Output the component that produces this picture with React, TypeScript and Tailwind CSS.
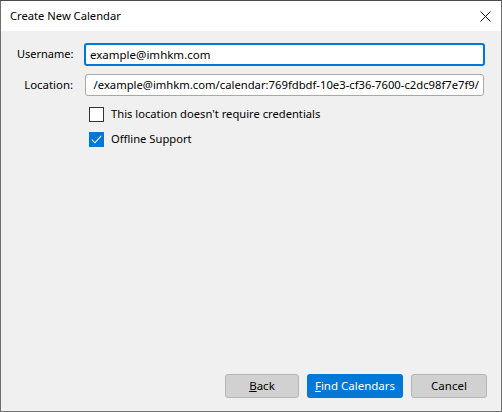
import React from "react";

const font = { fontFamily: '"Noto Sans", "Open Sans", sans-serif' };

const CheckRow = ({ checked, label }: { checked: boolean; label: string }) => (
  <label className="flex items-center gap-[7px] h-[16px] text-[11.2px] text-black">
    {checked ? (
      <span className="w-[15px] h-[15px] bg-[#0078d7] flex items-center justify-center">
        <svg width="11" height="9" viewBox="0 0 11 9">
          <path d="M0.8 4.6 L3.9 7.8 L10.2 0.8" fill="none" stroke="#fff" strokeWidth="1.1" />
        </svg>
      </span>
    ) : (
      <span className="w-[15px] h-[15px] bg-white border border-[#333333]" />
    )}
    <span>{label}</span>
  </label>
);

export default function App() {
  return (
    <div className="w-[502px] h-[412px] flex flex-col bg-[#3a3a3a]" style={font}>
      <div className="h-[1px] bg-[#4b4b4b]" />
      <div className="flex-1 flex flex-col border-x border-b border-[#6f6f6f]">
        {/* title bar */}
        <div className="h-[30px] bg-white flex items-center justify-between pl-[9px] pr-[10px]">
          <span className="text-[11.2px] text-black">Create New Calendar</span>
          <svg width="11" height="11" viewBox="0 0 11 11">
            <path d="M0.5 0.5 L10.5 10.5 M10.5 0.5 L0.5 10.5" stroke="#111" strokeWidth="1" />
          </svg>
        </div>

        {/* body */}
        <div className="flex-1 bg-[#f0f0f0] flex flex-col pt-[12px] pl-[16px] pr-[16px] pb-[13px]">
          <div className="grid grid-cols-[56px_minmax(0,1fr)] gap-x-[11px] items-center">
            <span className="text-[11px] text-black text-right">Username:</span>
            <div className="h-[23px] rounded-[3px] border-2 border-[#0078d7] bg-white flex items-center px-[4px] text-[11.5px] text-black">
              example@imhkm.com
            </div>
            <span className="text-[11.4px] text-black text-right mt-[8px]">Location:</span>
            <div className="mt-[8px] mx-[1px] h-[22px] rounded-[3px] border border-[#a8a8a8] bg-white flex items-center justify-end px-[4px] text-[11.25px] text-black overflow-hidden whitespace-nowrap">
              /example@imhkm.com/calendar:769fdbdf-10e3-cf36-7600-c2dc98f7e7f9/
            </div>
          </div>

          <div className="flex flex-col gap-[9px] pl-[72px] mt-[10px]">
            <CheckRow checked={false} label="This location doesn't require credentials" />
            <CheckRow checked={true} label="Offline Support" />
          </div>

          <div className="flex-1" />

          <div className="flex justify-end gap-[8px] mr-[-2px]">
            <button className="w-[74px] h-[24px] rounded-[3px] border border-[#b5b5b5] bg-[#d1d1d1] text-[11.5px] text-black">
              <span className="underline">B</span>ack
            </button>
            <button className="w-[96px] h-[24px] rounded-[3px] bg-[#0078d7] text-[11.5px] text-white">
              <span className="underline">F</span>ind Calendars
            </button>
            <button className="w-[76px] h-[24px] rounded-[3px] border border-[#b5b5b5] bg-[#d1d1d1] text-[11.5px] text-black">
              Cancel
            </button>
          </div>
        </div>
      </div>
    </div>
  );
}
